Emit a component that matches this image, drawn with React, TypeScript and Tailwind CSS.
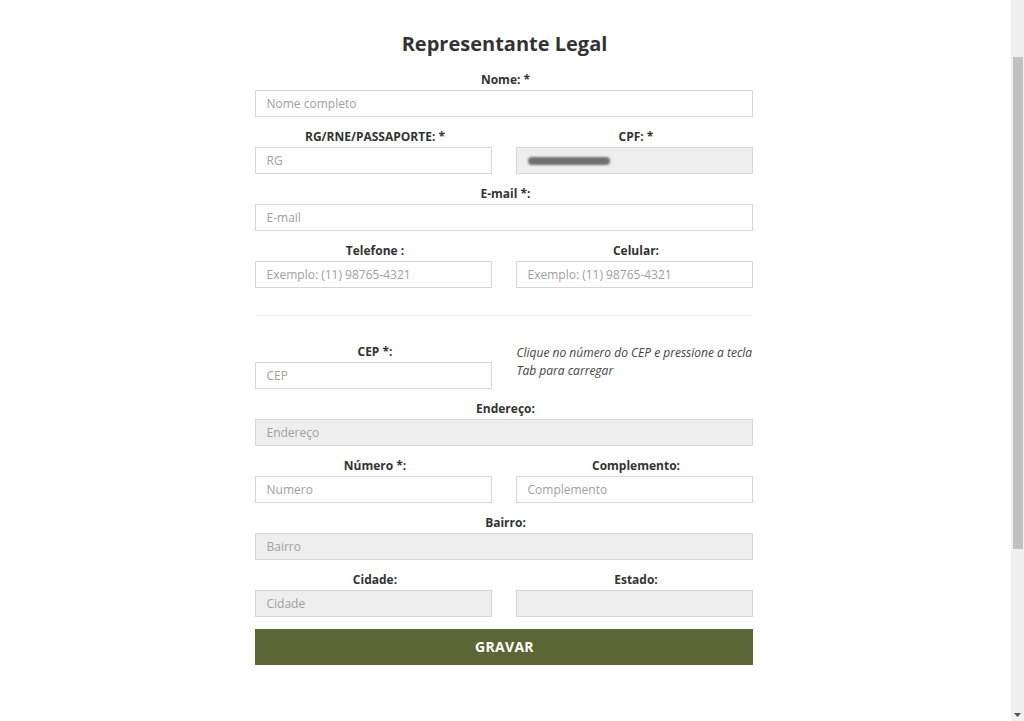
import React from "react";

const font = { fontFamily: '"Open Sans", "Liberation Sans", sans-serif' };

function Label({ children }: { children: React.ReactNode }) {
  return (
    <div className="h-[18px] mb-[2px] pt-[1px] pl-[4px] text-center text-xs font-bold leading-[17px] text-[#333]">
      {children}
    </div>
  );
}

function Input({ placeholder, disabled }: { placeholder?: string; disabled?: boolean }) {
  return (
    <input
      placeholder={placeholder}
      readOnly={disabled}
      className={
        "block h-[27px] w-full border border-[#d6d6d6] pl-[11px] pr-[10px] text-xs text-[#555] placeholder:text-[#a0a0a0] outline-none " +
        (disabled ? "bg-[#eeeeee]" : "bg-white")
      }
    />
  );
}

function Field({ label, placeholder, disabled }: { label: string; placeholder?: string; disabled?: boolean }) {
  return (
    <div className="mb-[10px]">
      <Label>{label}</Label>
      <Input placeholder={placeholder} disabled={disabled} />
    </div>
  );
}

function Row({ children }: { children: React.ReactNode }) {
  return <div className="grid grid-cols-2 gap-x-[24px]">{children}</div>;
}

export default function App() {
  return (
    <div className="flex h-[721px] bg-white" style={font}>
      <main className="flex-1 pt-[30px] pr-[4px]">
        <div className="mx-auto w-[498px]">
          <h1 className="mb-[12px] pl-[2px] text-center text-[20px] font-bold leading-[28px] text-[#333]">
            Representante Legal
          </h1>

          <Field label="Nome: *" placeholder="Nome completo" />
          <Row>
            <Field label="RG/RNE/PASSAPORTE: *" placeholder="RG" />
            <div className="mb-[10px]">
              <Label>CPF: *</Label>
              <div className="flex h-[27px] items-center border border-[#d6d6d6] bg-[#eeeeee] pl-[11px]">
                <div className="h-[8px] w-[82px] rounded-sm bg-[#6f6f6f] blur-[1px]" />
              </div>
            </div>
          </Row>
          <Field label="E-mail *:" placeholder="E-mail" />
          <Row>
            <Field label="Telefone :" placeholder="Exemplo: (11) 98765-4321" />
            <Field label="Celular:" placeholder="Exemplo: (11) 98765-4321" />
          </Row>

          <hr className="mt-[17px] mb-[26px] border-t border-[#eeeeee]" />

          <Row>
            <Field label="CEP *:" placeholder="CEP" />
            <p className="pl-[1px] pt-[2px] text-xs italic leading-[18px] text-[#444]">
              Clique no número do CEP e pressione a tecla Tab para carregar
            </p>
          </Row>
          <Field label="Endereço:" placeholder="Endereço" disabled />
          <Row>
            <Field label="Número *:" placeholder="Numero" />
            <Field label="Complemento:" placeholder="Complemento" />
          </Row>
          <Field label="Bairro:" placeholder="Bairro" disabled />
          <Row>
            <Field label="Cidade:" placeholder="Cidade" disabled />
            <Field label="Estado:" disabled />
          </Row>

          <button className="mt-[2px] block h-[36px] w-full pl-[2px] bg-[#5c6535] text-sm font-bold tracking-[0.3px] text-white">
            GRAVAR
          </button>
        </div>
      </main>

      <div className="flex w-[13px] flex-col bg-[#f0f0f0]">
        <div className="mt-[57px] ml-[2px] mr-[1px] h-[492px] bg-[#c1c1c1]" />
        <div className="mt-auto mb-[4px] flex justify-center">
          <svg width="7" height="4" viewBox="0 0 7 4">
            <path d="M0 0H7L3.5 4Z" fill="#505050" />
          </svg>
        </div>
      </div>
    </div>
  );
}
